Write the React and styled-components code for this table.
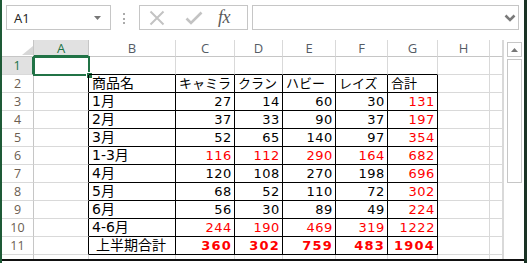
import React from 'react';
import styled, { createGlobalStyle } from 'styled-components';

const GREEN = '#217346';
const GRID = '#d9d9d9';
const CHROME = '#c6c6c6';

const GlobalStyle = createGlobalStyle`
  html, body { margin: 0; padding: 0; background: #ffffff; }
  body { font-family: "Liberation Sans", sans-serif; }
`;

const Window = styled.div`
  width: 527px;
  height: 263px;
  box-sizing: border-box;
  display: flex;
  flex-direction: column;
  border-left: 2px solid #1e5a36;
  border-right: 3px solid #1a3325;
  background: #fff;
  overflow: hidden;
`;

/* ---------- formula bar ---------- */

const FormulaBar = styled.div`
  flex: none;
  height: 40px;
  box-sizing: border-box;
  padding: 5px 0 0 4px;
  display: flex;
  align-items: flex-start;
`;

const Field = styled.div`
  flex: none;
  height: 25px;
  box-sizing: border-box;
  border: 1px solid ${CHROME};
  background: #fff;
  display: flex;
  align-items: center;
`;

const NameBox = styled(Field)`
  width: 105px;
  padding: 0 9px 0 7px;
  justify-content: space-between;
  font: 13px "Open Sans", sans-serif;
  color: #222;
`;

const Grip = styled.div`
  flex: none;
  width: 4px;
  height: 11px;
  margin: 8px 0 0 11px;
  display: flex;
  flex-direction: column;
  justify-content: space-between;
  align-items: center;
  & > span {
    width: 2px;
    height: 2px;
    background: #ababab;
  }
`;

const ActionGroup = styled(Field)`
  width: 109px;
  margin-left: 13px;
  padding-left: 8px;
`;

const ActionIcon = styled.svg`
  flex: none;
  margin-left: ${p => p.$gap || 0}px;
`;

const FxLabel = styled.span`
  margin-left: 15px;
  font: italic 18px "Liberation Serif", "DejaVu Serif", serif;
  color: #5a5a5a;
  letter-spacing: -0.5px;
  line-height: 1;
  padding-bottom: 2px;
`;

const FormulaInput = styled(Field)`
  width: 267px;
  margin-left: 4px;
  justify-content: flex-end;
  padding-right: 2px;
`;

/* ---------- sheet ---------- */

const Sheet = styled.div`
  flex: none;
  height: 219px;
  display: flex;
  overflow: hidden;
`;

const Grid = styled.div`
  flex: none;
  width: 501px;
  display: grid;
  grid-template-columns: 32px 55px 87px 59px 48px 53px 52px 50px 52px 13px;
  grid-template-rows: 17px;
  grid-auto-rows: 18px;
  align-content: start;
`;

const Corner = styled.div`
  box-sizing: border-box;
  border-right: 1px solid ${CHROME};
  border-bottom: 1px solid ${CHROME};
  display: flex;
  align-items: flex-end;
  justify-content: flex-end;
  padding: 0 0 1px 0;
`;

const ColHead = styled.div`
  box-sizing: border-box;
  border-right: 1px solid ${p => (p.$active ? CHROME : GRID)};
  border-bottom: ${p => (p.$active ? `2px solid ${GREEN}` : `1px solid ${CHROME}`)};
  display: flex;
  align-items: center;
  justify-content: center;
  font: 13px "Open Sans", sans-serif;
  color: ${p => (p.$active ? GREEN : '#555c66')};
  background: ${p => (p.$active ? '#e1e1e1' : '#fff')};
`;

const RowHead = styled.div`
  box-sizing: border-box;
  border-right: ${p => (p.$active ? `2px solid ${GREEN}` : `1px solid ${CHROME}`)};
  border-bottom: 1px solid ${GRID};
  display: flex;
  align-items: center;
  justify-content: center;
  font: 12.5px "Open Sans", sans-serif;
  color: ${p => (p.$active ? GREEN : '#6b5d50')};
  background: ${p => (p.$active ? '#e1e1e1' : '#fff')};
`;

const Cell = styled.div`
  position: relative;
  box-sizing: border-box;
  min-width: 0;
  border-right: 1px solid ${p => (p.$rightInk ? '#000' : GRID)};
  border-bottom: 1px solid ${p => (p.$bottomInk ? '#000' : GRID)};
  display: flex;
  align-items: center;
  justify-content: ${p => (p.$num ? 'flex-end' : 'flex-start')};
  padding: ${p => (p.$num ? '0 2px 0 0' : `0 0 0 ${p.$indent ? 7 : 3}px`)};
  white-space: nowrap;
  overflow: hidden;
  line-height: 17px;
  color: ${p => (p.$red ? '#ff0000' : '#000')};
  font-family: "DejaVu Sans", "Noto Sans CJK JP", sans-serif;
  font-size: ${p => (p.$num ? '13px' : p.$caption ? '13px' : '14px')};
  font-weight: ${p => (p.$bold ? 700 : 400)};
  letter-spacing: ${p => (p.$num ? (p.$bold ? '1.2px' : '0.6px') : '0')};
`;

const ActiveCell = styled(Cell)`
  overflow: visible;
`;

const Selection = styled.div`
  position: absolute;
  top: -1px;
  left: -1px;
  right: -2px;
  bottom: -2px;
  border: 2px solid ${GREEN};
  pointer-events: none;
`;

const FillHandle = styled.div`
  position: absolute;
  right: -5px;
  bottom: -5px;
  width: 5px;
  height: 5px;
  background: ${GREEN};
  border: 1px solid #fff;
`;

const ScrollTrack = styled.div`
  flex: none;
  width: 21px;
  box-sizing: border-box;
  border-left: 1px solid ${GRID};
  padding: 2px 2px 0 3px;
  display: flex;
  flex-direction: column;
  gap: 2px;
  background: #fff;
`;

const ScrollButton = styled.div`
  flex: none;
  height: 15px;
  box-sizing: border-box;
  border: 1px solid ${CHROME};
  display: flex;
  align-items: center;
  justify-content: center;
`;

const ScrollThumb = styled.div`
  flex: none;
  height: 124px;
  box-sizing: border-box;
  border: 1px solid ${CHROME};
  background: #fff;
`;

const BottomRule = styled.div`
  flex: none;
  height: 2px;
  background: #111;
`;

const BottomGap = styled.div`
  flex: none;
  height: 2px;
  background: #fff;
`;

/* ---------- data ---------- */

const COLUMNS = ['A', 'B', 'C', 'D', 'E', 'F', 'G', 'H', ''];
const VISIBLE_ROWS = 11;

// red: which value indexes print in red ('all' for every one)
const TABLE = [
  { label: '商品名', values: ['キャミラ', 'クラン', 'ハビー', 'レイズ', '合計'], text: true },
  { label: '1月', values: [27, 14, 60, 30, 131], red: [4] },
  { label: '2月', values: [37, 33, 90, 37, 197], red: [4] },
  { label: '3月', values: [52, 65, 140, 97, 354], red: [4] },
  { label: '1-3月', values: [116, 112, 290, 164, 682], red: 'all' },
  { label: '4月', values: [120, 108, 270, 198, 696], red: [4] },
  { label: '5月', values: [68, 52, 110, 72, 302], red: [4] },
  { label: '6月', values: [56, 30, 89, 49, 224], red: [4] },
  { label: '4-6月', values: [244, 190, 469, 319, 1222], red: 'all' },
  { label: '上半期合計', values: [360, 302, 759, 483, 1904], red: 'all', bold: true, indent: true },
];

function CellAt({ row, col }) {
  const inRows = row >= 2 && row <= 11;
  const rightInk = inRows && col <= 6;
  const bottomInk = row >= 1 && row <= 11 && col >= 1 && col <= 6;
  const entry = inRows ? TABLE[row - 2] : null;

  if (row === 1 && col === 0) {
    return (
      <ActiveCell $rightInk={rightInk} $bottomInk={bottomInk}>
        <Selection />
        <FillHandle />
      </ActiveCell>
    );
  }

  if (entry && col === 1) {
    return (
      <Cell $rightInk $bottomInk $indent={entry.indent}>
        {entry.label}
      </Cell>
    );
  }

  if (entry && col >= 2 && col <= 6) {
    const i = col - 2;
    const red = entry.red === 'all' || (entry.red && entry.red.includes(i));
    return (
      <Cell
        $rightInk
        $bottomInk
        $num={!entry.text}
        $caption={entry.text}
        $red={red}
        $bold={entry.bold}
      >
        {entry.values[i]}
      </Cell>
    );
  }

  return <Cell $rightInk={rightInk} $bottomInk={bottomInk} />;
}

export default function App() {
  // one extra row peeks out under row 11 before the window edge
  const rowNumbers = Array.from({ length: VISIBLE_ROWS + 1 }, (_, i) => i + 1);

  return (
    <>
      <GlobalStyle />
      <Window>
        <FormulaBar>
          <NameBox>
            <span>A1</span>
            <svg width="7" height="4" viewBox="0 0 7 4">
              <path d="M0 0h7L3.5 4z" fill="#777" />
            </svg>
          </NameBox>
          <Grip>
            <span />
            <span />
            <span />
          </Grip>
          <ActionGroup>
            <ActionIcon width="18" height="16" viewBox="0 0 18 16">
              <path d="M2.5 1.5l13 13M15.5 1.5l-13 13" stroke="#c3c3c3" strokeWidth="2" fill="none" />
            </ActionIcon>
            <ActionIcon $gap={19} width="18" height="16" viewBox="0 0 18 16">
              <path d="M1.5 8.5l4.5 4.5L16.5 2.5" stroke="#c3c3c3" strokeWidth="2.6" fill="none" />
            </ActionIcon>
            <FxLabel>fx</FxLabel>
          </ActionGroup>
          <FormulaInput>
            <svg width="12" height="8" viewBox="0 0 12 8">
              <path d="M1.5 1.5L6 6l4.5-4.5" stroke="#7a7a7a" strokeWidth="2.6" fill="none" />
            </svg>
          </FormulaInput>
        </FormulaBar>

        <Sheet>
          <Grid>
            <Corner>
              <svg width="11" height="9" viewBox="0 0 11 9">
                <path d="M11 0V9H0z" fill="#d7d7d7" />
              </svg>
            </Corner>
            {COLUMNS.map((c, i) => (
              <ColHead key={`h${i}`} $active={c === 'A'}>
                {c}
              </ColHead>
            ))}
            {rowNumbers.map(r => (
              <React.Fragment key={r}>
                <RowHead $active={r === 1}>{r <= VISIBLE_ROWS ? r : ''}</RowHead>
                {COLUMNS.map((_, c) => (
                  <CellAt key={c} row={r} col={c} />
                ))}
              </React.Fragment>
            ))}
          </Grid>
          <ScrollTrack>
            <ScrollButton>
              <svg width="7" height="4" viewBox="0 0 7 4">
                <path d="M0 4h7L3.5 0z" fill="#777" />
              </svg>
            </ScrollButton>
            <ScrollThumb />
          </ScrollTrack>
        </Sheet>
        <BottomRule />
        <BottomGap />
      </Window>
    </>
  );
}
